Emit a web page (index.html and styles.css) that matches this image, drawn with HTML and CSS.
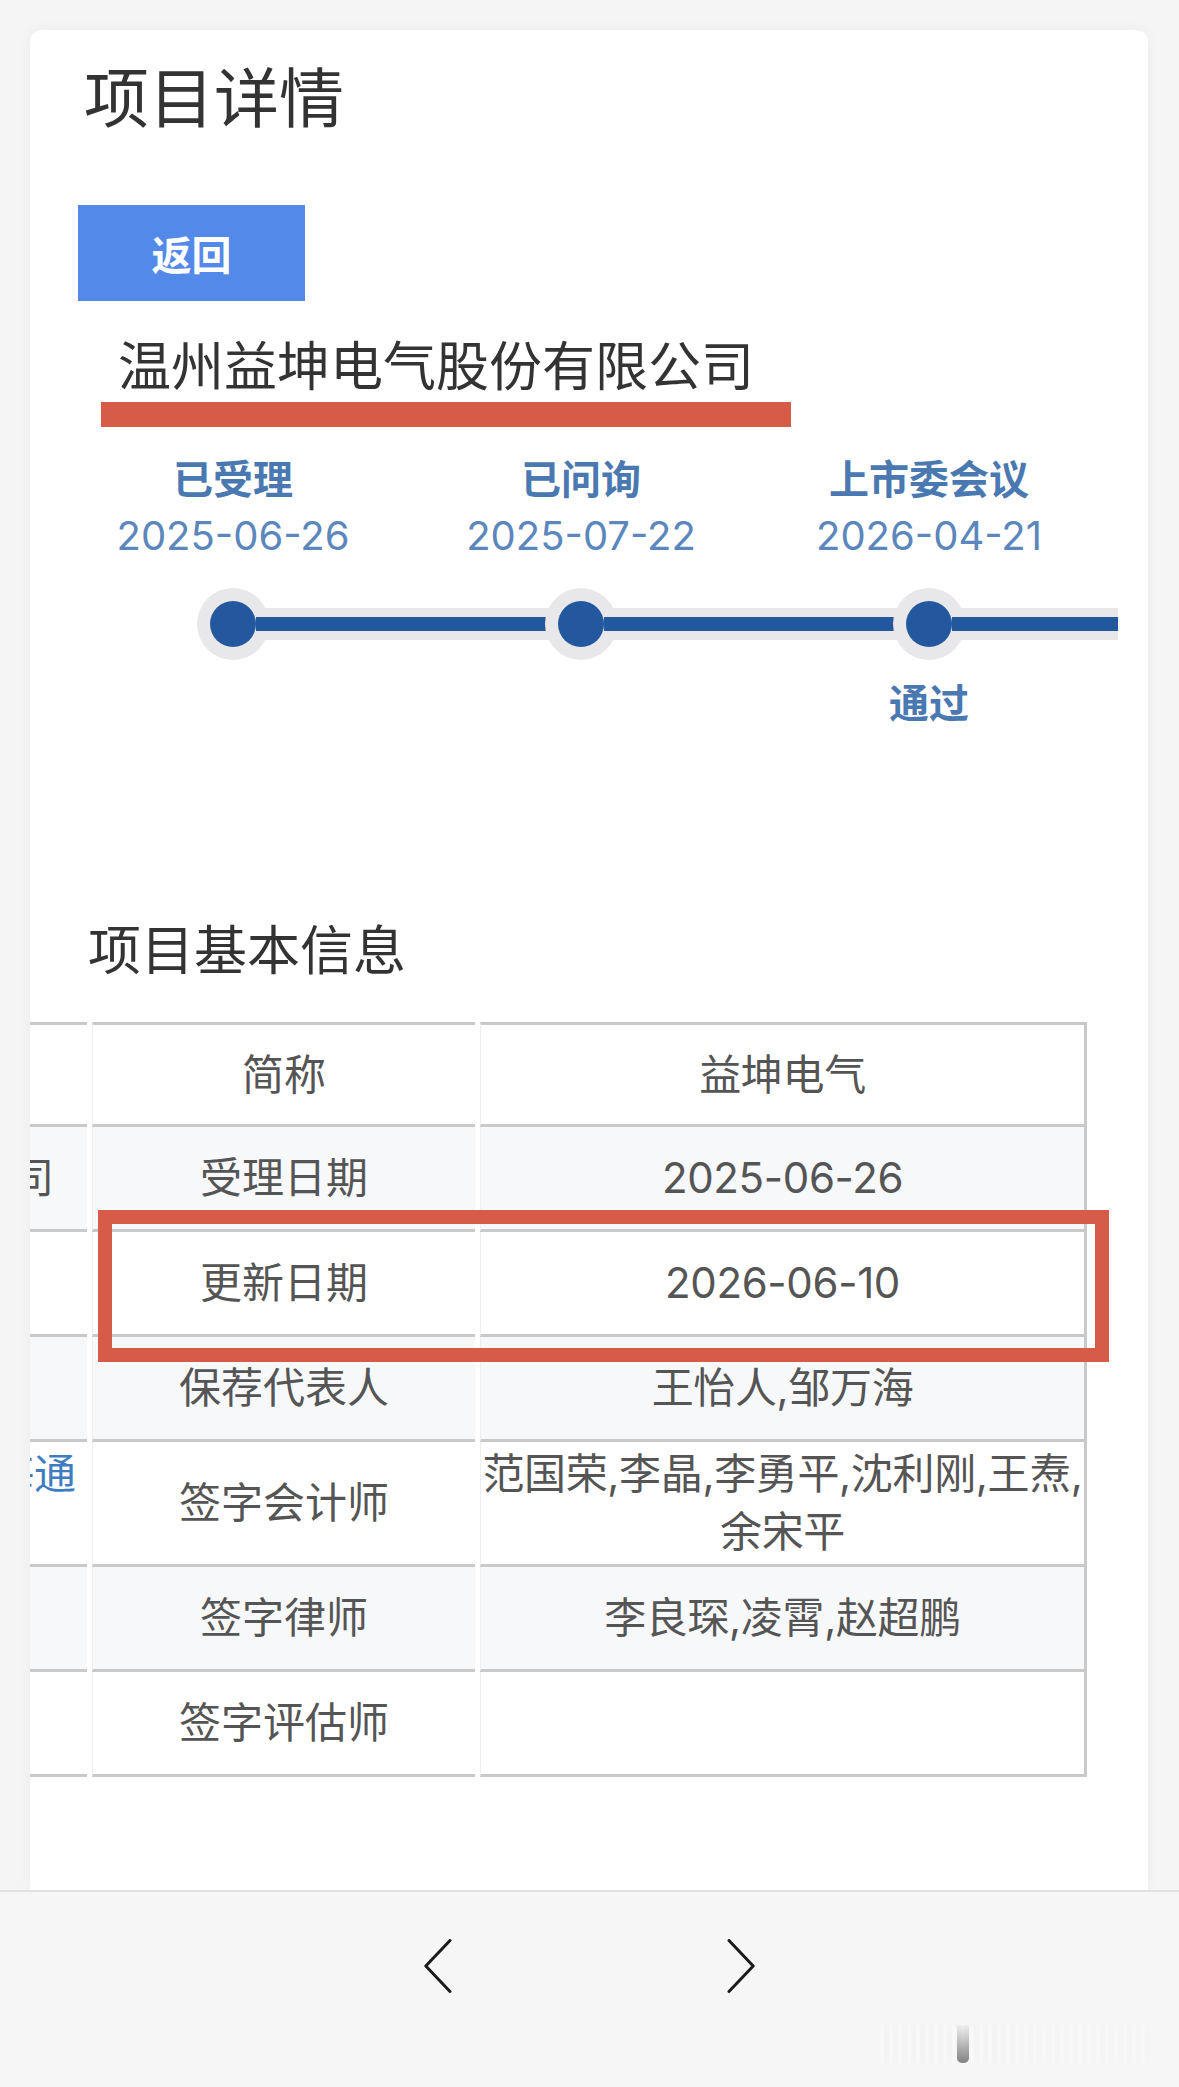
FILE: index.html
```html
<!DOCTYPE html>
<html>
    <head>
        <meta charset="utf-8">
        <title>项目详情</title>
        <link rel="stylesheet" href="styles.css">
    </head>
    <body>
        <div class="screen">
            <div class="main">
                <div class="card">
                    <h1 class="page-title">项目详情</h1>
                    <button class="back-btn">返回</button>
                    <h2 class="company">温州益坤电气股份有限公司</h2>

                    <div class="timeline">
                        <div class="step">
                            <div class="step-name">已受理</div>
                            <div class="step-date">2025-06-26</div>
                            <div class="step-track"><span class="seg"></span><span class="dot"></span><span class="seg"></span></div>
                            <div class="step-result"></div>
                        </div>
                        <div class="step">
                            <div class="step-name">已问询</div>
                            <div class="step-date">2025-07-22</div>
                            <div class="step-track"><span class="seg"></span><span class="dot"></span><span class="seg"></span></div>
                            <div class="step-result"></div>
                        </div>
                        <div class="step">
                            <div class="step-name">上市委会议</div>
                            <div class="step-date">2026-04-21</div>
                            <div class="step-track"><span class="seg"></span><span class="dot"></span><span class="seg"></span></div>
                            <div class="step-result">通过</div>
                        </div>
                        <div class="step">
                            <div class="step-name"></div>
                            <div class="step-date"></div>
                            <div class="step-track"><span class="seg"></span><span class="dot"></span><span class="seg"></span></div>
                            <div class="step-result"></div>
                        </div>
                    </div>

                    <h3 class="section-title">项目基本信息</h3>
                    <div class="table-wrap">
                        <table class="info-table">
                            <colgroup>
                                <col class="c1">
                                <col class="c2">
                                <col class="c3">
                            </colgroup>
                            <tr><td class="cut"></td><td>简称</td><td class="val">益坤电气</td></tr>
                            <tr><td class="cut cut-a">股份有限公司</td><td>受理日期</td><td class="val">2025-06-26</td></tr>
                            <tr><td class="cut"></td><td>更新日期</td><td class="val">2026-06-10</td></tr>
                            <tr><td class="cut"></td><td>保荐代表人</td><td class="val">王怡人,邹万海</td></tr>
                            <tr><td class="cut cut-b">国泰海通</td><td>签字会计师</td><td class="val">范国荣,李晶,李勇平,沈利刚,王焘,余宋平</td></tr>
                            <tr><td class="cut"></td><td>签字律师</td><td class="val">李良琛,凌霄,赵超鹏</td></tr>
                            <tr><td class="cut"></td><td>签字评估师</td><td class="val"></td></tr>
                        </table>
                        <div class="mark-box"></div>
                    </div>
                </div>
            </div>
            <div class="toolbar">
                <svg class="chev" width="28" height="54" viewBox="0 0 28 54"><polyline points="26,1.5 1.8,27 26,52.5" fill="none" stroke="#1b1b1b" stroke-width="3" stroke-linecap="round" stroke-linejoin="round"/></svg>
                <svg class="chev" width="28" height="54" viewBox="0 0 28 54"><polyline points="2,1.5 26.2,27 2,52.5" fill="none" stroke="#1b1b1b" stroke-width="3" stroke-linecap="round" stroke-linejoin="round"/></svg>
                <div class="watermark"></div>
            </div>
        </div>
    </body>
</html>
```

FILE: styles.css
```css
body {
    margin: 0;
    background: #f5f5f5;
    font-family: "Inter", "Noto Sans CJK SC", sans-serif;
}
.screen {
    height: 2087px;
    display: flex;
    flex-direction: column;
}
.main {
    flex: 1;
    min-height: 0;
    padding: 30px 31px 0 30px;
    overflow: hidden;
}
.card {
    height: 100%;
    box-sizing: border-box;
    padding: 30px 30px 0 48px;
    background: #fff;
    border-radius: 12px 12px 0 0;
    box-shadow: 0 0 14px rgba(0, 0, 0, 0.04);
}
.page-title {
    margin: 0;
    padding-left: 6px;
    font-size: 65px;
    line-height: 77px;
    font-weight: 400;
    color: #333;
}
.back-btn {
    display: block;
    margin-top: 68px;
    width: 227px;
    height: 96px;
    padding: 0;
    border: 0;
    background: #5389e8;
    color: #fff;
    font: 700 40px "Inter", "Noto Sans CJK SC", sans-serif;
}
.company {
    margin: 35px 0 0 23px;
    width: 690px;
    box-sizing: border-box;
    padding: 0 0 4px 17px;
    border-bottom: 25px solid #d75b49;
    font-size: 53px;
    line-height: 62px;
    font-weight: 400;
    color: #333;
}

/* progress line */
.timeline {
    display: flex;
    margin: 27px 0 0 -19px;
    overflow: hidden;
}
.step {
    flex: 0 0 348px;
    text-align: center;
}
.step-name {
    height: 52px;
    font-size: 40px;
    line-height: 52px;
    font-weight: 700;
    color: #4a78b0;
    white-space: nowrap;
}
.step-date {
    height: 52px;
    margin-top: 4px;
    font-size: 40px;
    line-height: 52px;
    color: #5b87bd;
}
.step-track {
    display: flex;
    align-items: center;
    height: 72px;
    margin-top: 26px;
}
.seg {
    flex: 1;
    height: 14px;
    background: #23589e;
    border-top: 9px solid #e8e8ea;
    border-bottom: 9px solid #e8e8ea;
}
.step:first-child .seg:first-child {
    visibility: hidden;
}
.dot {
    flex: none;
    width: 46px;
    height: 46px;
    border-radius: 50%;
    background: #23589e;
    box-shadow: 0 0 0 13px #e8e8ea;
}
.step-result {
    height: 52px;
    margin-top: 18px;
    font-size: 40px;
    line-height: 52px;
    font-weight: 700;
    color: #4a78b0;
}

.section-title {
    margin: 189px 0 0 10px;
    font-size: 53px;
    line-height: 64px;
    font-weight: 400;
    color: #333;
}

/* info table, scrolled sideways */
.table-wrap {
    position: relative;
    margin: 39px 0 0 -48px;
    overflow: hidden;
}
.info-table {
    table-layout: fixed;
    border-collapse: separate;
    border-spacing: 5px 0;
    width: 1393px;
    margin-left: -331px;
    font-size: 42px;
    line-height: 58px;
    color: #555;
}
.c1, .c2 {
    width: 383px;
}
.c3 {
    width: 607px;
}
.info-table tr {
    height: 105px;
}
.info-table td {
    padding: 3px 0;
    text-align: center;
    vertical-align: middle;
    background: #fff;
    border-bottom: 3px solid #c9c9c9;
    border-left: 1px solid #eeeeee;
}
.info-table tr:first-child td {
    border-top: 3px solid #c9c9c9;
}
.info-table tr:nth-child(even) td {
    background: #f7f8fa;
}
.info-table td.val {
    border-right: 3px solid #c9c9c9;
    letter-spacing: -0.35px;
}
.info-table td.cut {
    text-align: right;
    white-space: nowrap;
    overflow: hidden;
}
.info-table td.cut-a {
    padding-right: 33px;
}
.info-table td.cut-b {
    padding-right: 11px;
    vertical-align: top;
    color: #3f7cc0;
}
.mark-box {
    position: absolute;
    left: 68px;
    top: 188px;
    width: 1011px;
    height: 152px;
    box-sizing: border-box;
    border: 14px solid #d65b48;
}

/* bottom browser bar */
.toolbar {
    position: relative;
    flex: 0 0 197px;
    box-sizing: border-box;
    display: flex;
    justify-content: center;
    align-items: flex-start;
    gap: 275px;
    padding-top: 47px;
    background: #f6f6f6;
    border-top: 2px solid #e2e2e2;
}
.watermark {
    position: absolute;
    left: 880px;
    top: 133px;
    width: 270px;
    height: 38px;
    background: repeating-linear-gradient(90deg, rgba(255, 255, 255, 0.5) 0 4px, rgba(240, 240, 240, 0.3) 4px 9px);
    opacity: 0.5;
}
.watermark::after {
    content: "";
    position: absolute;
    left: 77px;
    top: 0;
    width: 12px;
    height: 38px;
    border-radius: 0 0 5px 5px;
    background: linear-gradient(rgba(0, 0, 0, 0.05), #111);
}
```
